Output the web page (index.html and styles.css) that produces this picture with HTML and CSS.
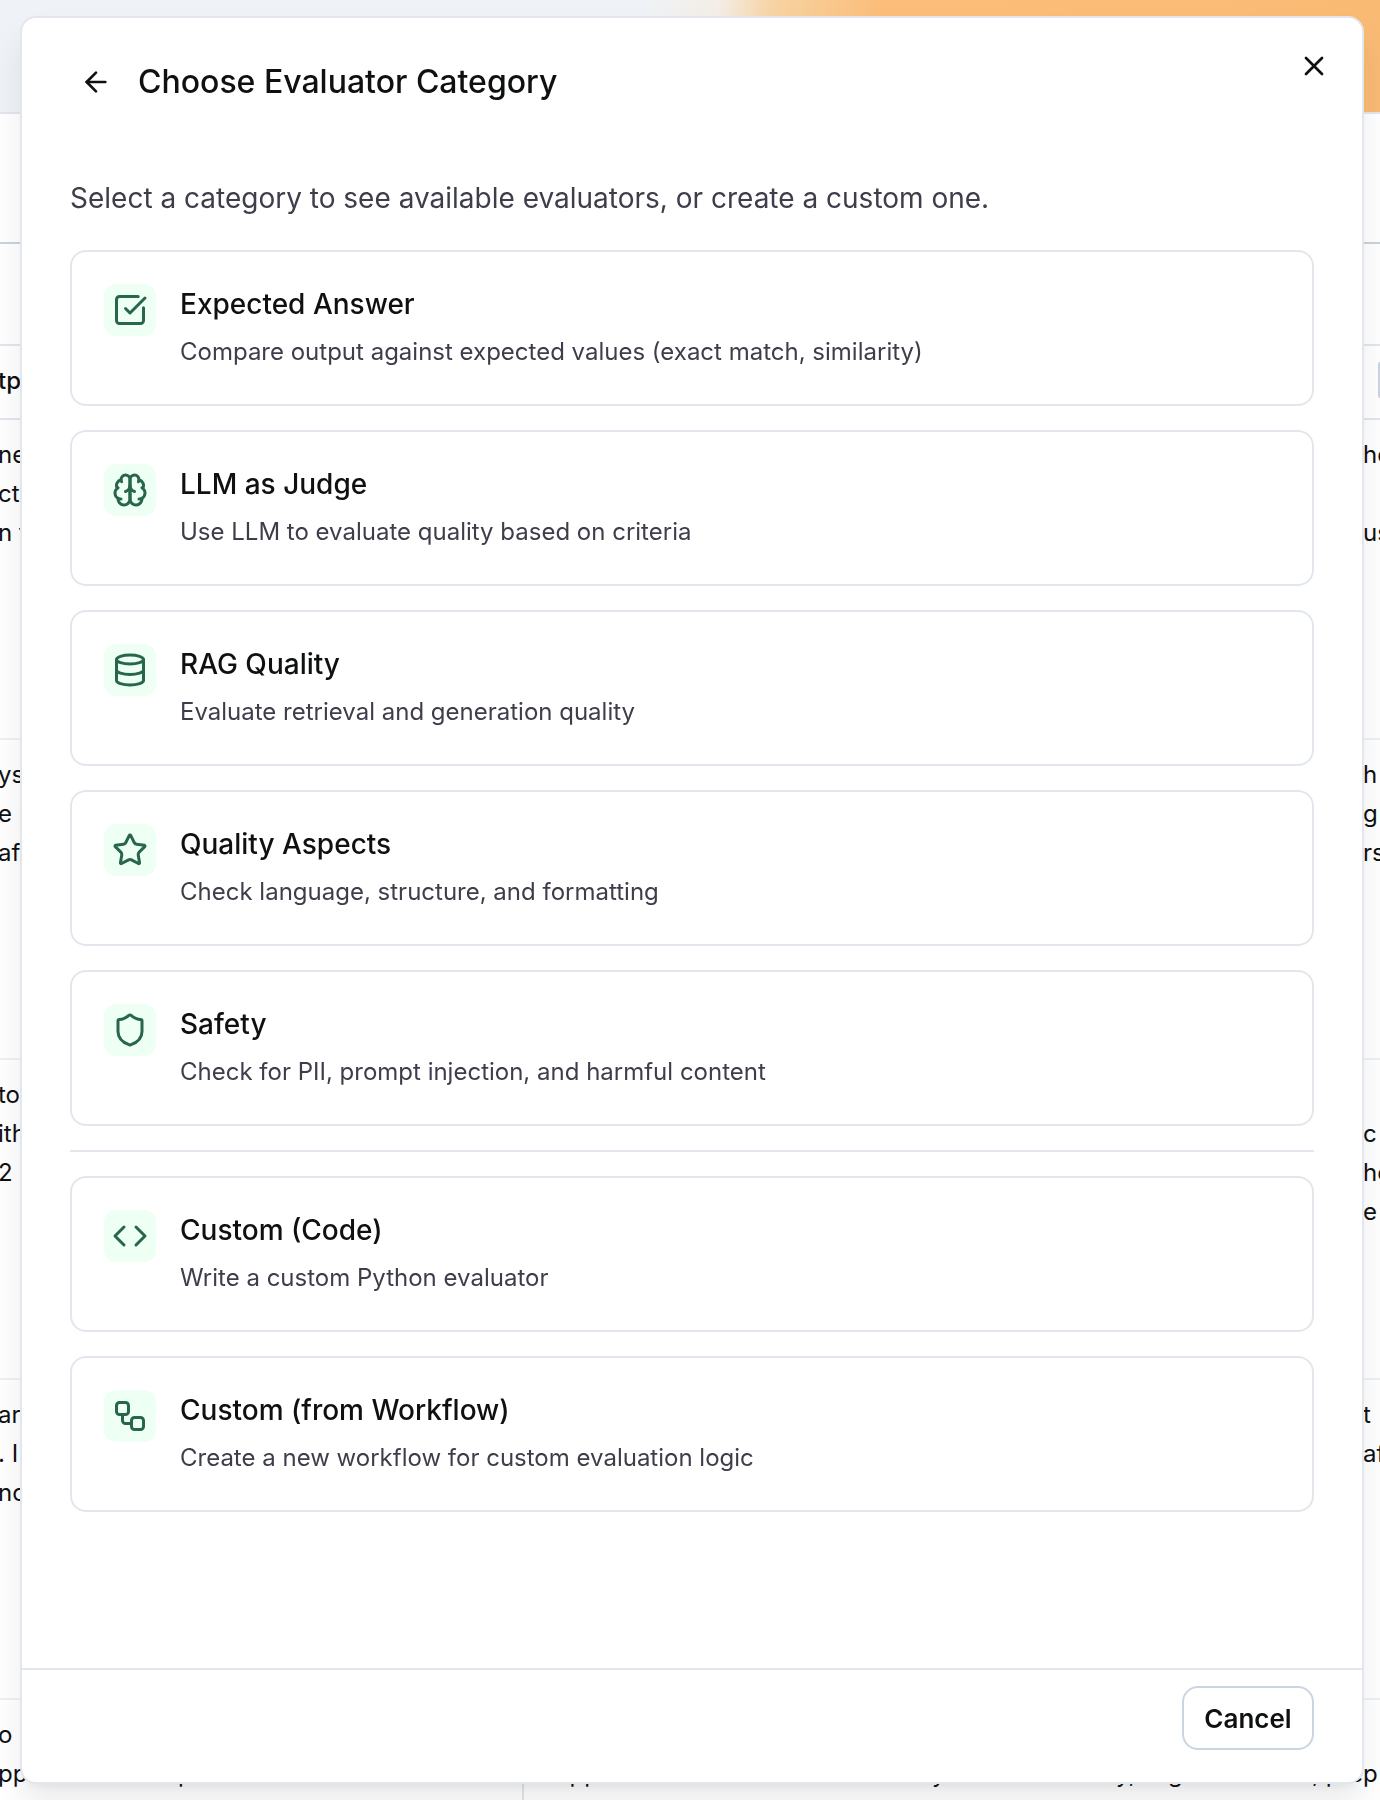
FILE: index.html
```html
<!DOCTYPE html>
<html lang="en">
<head>
    <meta charset="UTF-8">
    <meta name="viewport" content="width=device-width, initial-scale=1.0">
    <title>Choose Evaluator Category</title>
    <link rel="stylesheet" href="styles.css">
</head>
<body>
    <div class="page">
        <div class="page-banner"></div>
        <div class="page-toolbar"></div>
        <div class="page-tabs"></div>
        <table class="results">
            <thead>
                <tr>
                    <th class="col-output"><span class="cell">tp</span></th>
                    <th class="col-answer"></th>
                    <th class="col-rest"><span class="handle"></span></th>
                </tr>
            </thead>
            <tbody>
                <tr>
                    <td><div class="cell">ne<br>ct<br>n t</div></td>
                    <td class="col-answer"></td>
                    <td>he<br><br>us</td>
                </tr>
                <tr>
                    <td><div class="cell">ys<br>e p<br>af</div></td>
                    <td class="col-answer"></td>
                    <td>h<br>g<br>rs</td>
                </tr>
                <tr>
                    <td><div class="cell">to<br>ith<br>2</div></td>
                    <td class="col-answer"></td>
                    <td><br>c<br>he<br>e</td>
                </tr>
                <tr>
                    <td><div class="cell">arg<br>. I<br>nc</div></td>
                    <td class="col-answer"></td>
                    <td>t<br>af</td>
                </tr>
                <tr>
                    <td><div class="cell">o<br><span class="words words-left"><span>pp</span><span>p</span></span></div></td>
                    <td class="col-answer" colspan="2"><br><span class="words words-right"><span>Supp</span><span>y</span><span>y,</span><span>g</span><span>, prep</span></span></td>
                </tr>
            </tbody>
        </table>
    </div>

    <div class="overlay">
        <div class="modal" role="dialog" aria-labelledby="modal-title">
            <button class="close-btn" type="button" aria-label="Close">
                <svg class="icon" viewBox="0 0 24 24"><path d="M18 6 6 18"/><path d="m6 6 12 12"/></svg>
            </button>
            <div class="modal-header">
                <button class="back-btn" type="button" aria-label="Back">
                    <svg class="icon" viewBox="0 0 24 24"><path d="m12 19-7-7 7-7"/><path d="M19 12H5"/></svg>
                </button>
                <h1 id="modal-title">Choose Evaluator Category</h1>
            </div>

            <div class="modal-body">
                <p class="intro">Select a category to see available evaluators, or create a custom one.</p>
                <div class="cards">
                    <button class="card" type="button">
                        <span class="card-icon">
                            <svg class="icon" viewBox="0 0 24 24"><path d="M21 10.5V19a2 2 0 0 1-2 2H5a2 2 0 0 1-2-2V5a2 2 0 0 1 2-2h12.5"/><path d="m9 11 3 3L22 4"/></svg>
                        </span>
                        <span class="card-text">
                            <span class="card-title">Expected Answer</span>
                            <span class="card-desc">Compare output against expected values (exact match, similarity)</span>
                        </span>
                    </button>
                    <button class="card" type="button">
                        <span class="card-icon">
                            <svg class="icon" viewBox="0 0 24 24"><path d="M12 5a3 3 0 1 0-5.997.125 4 4 0 0 0-2.526 5.77 4 4 0 0 0 .556 6.588A4 4 0 1 0 12 18Z"/><path d="M12 5a3 3 0 1 1 5.997.125 4 4 0 0 1 2.526 5.77 4 4 0 0 1-.556 6.588A4 4 0 1 1 12 18Z"/><path d="M15 13a4.500 4.500 0 0 1-3-4 4.500 4.500 0 0 1-3 4"/><path d="M17.599 6.500a3 3 0 0 0 .399-1.375"/><path d="M6.003 5.125A3 3 0 0 0 6.401 6.500"/><path d="M3.477 10.896a4 4 0 0 1 .585-.396"/><path d="M19.938 10.500a4 4 0 0 1 .585.396"/><path d="M6 18a4 4 0 0 1-1.967-.516"/><path d="M19.967 17.484A4 4 0 0 1 18 18"/></svg>
                        </span>
                        <span class="card-text">
                            <span class="card-title">LLM as Judge</span>
                            <span class="card-desc">Use LLM to evaluate quality based on criteria</span>
                        </span>
                    </button>
                    <button class="card" type="button">
                        <span class="card-icon">
                            <svg class="icon" viewBox="0 0 24 24"><ellipse cx="12" cy="5" rx="9" ry="3"/><path d="M3 5v14a9 3 0 0 0 18 0V5"/><path d="M3 12a9 3 0 0 0 18 0"/></svg>
                        </span>
                        <span class="card-text">
                            <span class="card-title">RAG Quality</span>
                            <span class="card-desc">Evaluate retrieval and generation quality</span>
                        </span>
                    </button>
                    <button class="card" type="button">
                        <span class="card-icon">
                            <svg class="icon" viewBox="0 0 24 24"><path d="M11.525 2.295a.53.53 0 0 1 .95 0l2.310 4.679a2.123 2.123 0 0 0 1.595 1.160l5.166.756a.53.53 0 0 1 .294.904l-3.736 3.638a2.123 2.123 0 0 0-.611 1.878l.882 5.140a.53.53 0 0 1-.771.560l-4.618-2.428a2.122 2.122 0 0 0-1.973 0L6.396 21.010a.53.53 0 0 1-.770-.560l.881-5.139a2.122 2.122 0 0 0-.611-1.879L2.160 9.795a.53.53 0 0 1 .294-.906l5.165-.755a2.122 2.122 0 0 0 1.597-1.160z"/></svg>
                        </span>
                        <span class="card-text">
                            <span class="card-title">Quality Aspects</span>
                            <span class="card-desc">Check language, structure, and formatting</span>
                        </span>
                    </button>
                    <button class="card" type="button">
                        <span class="card-icon">
                            <svg class="icon" viewBox="0 0 24 24"><path d="M20 13c0 5-3.500 7.500-7.660 8.950a1 1 0 0 1-.670-.010C7.500 20.500 4 18 4 13V6a1 1 0 0 1 1-1c2 0 4.500-1.200 6.240-2.720a1.170 1.170 0 0 1 1.520 0C14.510 3.810 17 5 19 5a1 1 0 0 1 1 1z"/></svg>
                        </span>
                        <span class="card-text">
                            <span class="card-title">Safety</span>
                            <span class="card-desc">Check for PII, prompt injection, and harmful content</span>
                        </span>
                    </button>
                    <hr class="divider">
                    <button class="card" type="button">
                        <span class="card-icon">
                            <svg class="icon" viewBox="0 0 24 24"><path d="m16 18 6-6-6-6"/><path d="m8 6-6 6 6 6"/></svg>
                        </span>
                        <span class="card-text">
                            <span class="card-title">Custom (Code)</span>
                            <span class="card-desc">Write a custom Python evaluator</span>
                        </span>
                    </button>
                    <button class="card" type="button">
                        <span class="card-icon">
                            <svg class="icon" viewBox="0 0 24 24"><rect width="8" height="8" x="3" y="3" rx="2"/><path d="M7 11v4a2 2 0 0 0 2 2h4"/><rect width="8" height="8" x="13" y="13" rx="2"/></svg>
                        </span>
                        <span class="card-text">
                            <span class="card-title">Custom (from Workflow)</span>
                            <span class="card-desc">Create a new workflow for custom evaluation logic</span>
                        </span>
                    </button>
                </div>
            </div>

            <div class="modal-footer">
                <button class="cancel-btn" type="button">Cancel</button>
            </div>
        </div>
    </div>
</body>
</html>
```
FILE: styles.css
```css
* {
    box-sizing: border-box;
}
body {
    margin: 0;
    font-family: Inter, sans-serif;
    color: #0f1012;
    background-color: #ffffff;
}
button {
    font-family: inherit;
    color: inherit;
    cursor: pointer;
}

/* page behind the dialog */
.page {
    height: 100vh;
    overflow: hidden;
}
.page-banner {
    height: 114px;
    border-bottom: 2px solid #e1e7ec;
    background: linear-gradient(90deg, #eff3f8 46%, #f3eee7 52%, #f7d3a3 56%, #fbbd79 64%, #f9bb74 100%);
}
.page-toolbar {
    height: 130px;
    border-bottom: 2px solid #cbd2da;
}
.page-tabs {
    height: 102px;
    border-bottom: 2px solid #e1e7ec;
}
.results {
    width: 100%;
    table-layout: fixed;
    border-collapse: separate;
    border-spacing: 0;
    font-size: 24px;
    line-height: 39px;
}
.results th {
    height: 74px;
    padding: 0 0 4px;
    text-align: left;
    font-weight: 500;
    border-bottom: 2px solid #e1e7ec;
}
.results td {
    height: 320px;
    padding: 15px 0 16px;
    vertical-align: top;
    white-space: nowrap;
    border-bottom: 2px solid #edf0f4;
}
.cell {
    margin-left: -2px;
}
.col-output {
    width: 522px;
}
.results .col-answer {
    border-left: 2px solid #e1e7ec;
}
.results td.col-answer {
    padding-left: 16px;
}
.results .col-rest {
    width: 17px;
}
.handle {
    display: block;
    width: 2px;
    height: 36px;
    margin-left: auto;
    border-radius: 8px 0 0 8px;
    background-color: #cbd5e1;
}
.words {
    display: grid;
}
.words-left {
    grid-template-columns: 180px auto;
}
.words-right {
    grid-template-columns: 392px 184px 52px 144px auto;
}

/* dialog */
.overlay {
    position: fixed;
    inset: 0;
    display: flex;
    padding: 16px 16px 16px 20px;
}
.modal {
    position: relative;
    flex: 1;
    display: flex;
    flex-direction: column;
    background-color: #ffffff;
    border: 2px solid #e1e7ec;
    border-radius: 16px;
    box-shadow: 0 20px 32px 0 rgba(0, 0, 0, 0.08), 0 8px 12px -8px rgba(0, 0, 0, 0.1);
}
.icon {
    display: block;
    width: 32px;
    height: 32px;
    fill: none;
    stroke: currentColor;
    stroke-width: 2;
    stroke-linecap: round;
    stroke-linejoin: round;
}
.close-btn {
    position: absolute;
    top: 32px;
    right: 32px;
    padding: 0;
    border: none;
    background: none;
}
.modal-header {
    display: flex;
    align-items: center;
    gap: 16px;
    padding: 32px 48px 0;
}
.modal-header h1 {
    margin: 0;
    font-size: 32px;
    line-height: 64px;
    font-weight: 500;
}
.back-btn {
    padding: 10px;
    border: none;
    border-radius: 8px;
    background: none;
}
.modal-body {
    flex: 1;
    padding: 64px 48px 0;
}
.intro {
    margin: 0 0 32px;
    font-size: 28px;
    line-height: 40px;
    color: #3e3e4b;
}
.cards {
    display: flex;
    flex-direction: column;
    gap: 24px;
}
.card {
    display: flex;
    align-items: flex-start;
    gap: 24px;
    padding: 32px;
    text-align: left;
    background-color: #ffffff;
    border: 2px solid #e1e7ec;
    border-radius: 16px;
}
.card:hover {
    background-color: #f8fafc;
}
.card-icon {
    padding: 8px;
    border-radius: 12px;
    background-color: #eefff4;
    color: #276749;
}
.card-icon .icon {
    width: 36px;
    height: 36px;
}
.card-text {
    display: flex;
    flex-direction: column;
    gap: 8px;
    line-height: 40px;
}
.card-title {
    font-size: 28px;
    font-weight: 500;
}
.card-desc {
    font-size: 24px;
    color: #3e3e4b;
}
.divider {
    width: 100%;
    height: 2px;
    margin: 0;
    border: none;
    background-color: #e1e7ec;
}
.modal-footer {
    display: flex;
    justify-content: flex-end;
    padding: 16px 48px 32px;
    border-top: 2px solid #e1e7ec;
}
.cancel-btn {
    min-width: 132px;
    height: 64px;
    padding: 0 20px;
    font-size: 26px;
    font-weight: 600;
    background-color: #ffffff;
    border: 2px solid #cbd5e1;
    border-radius: 16px;
}
```
